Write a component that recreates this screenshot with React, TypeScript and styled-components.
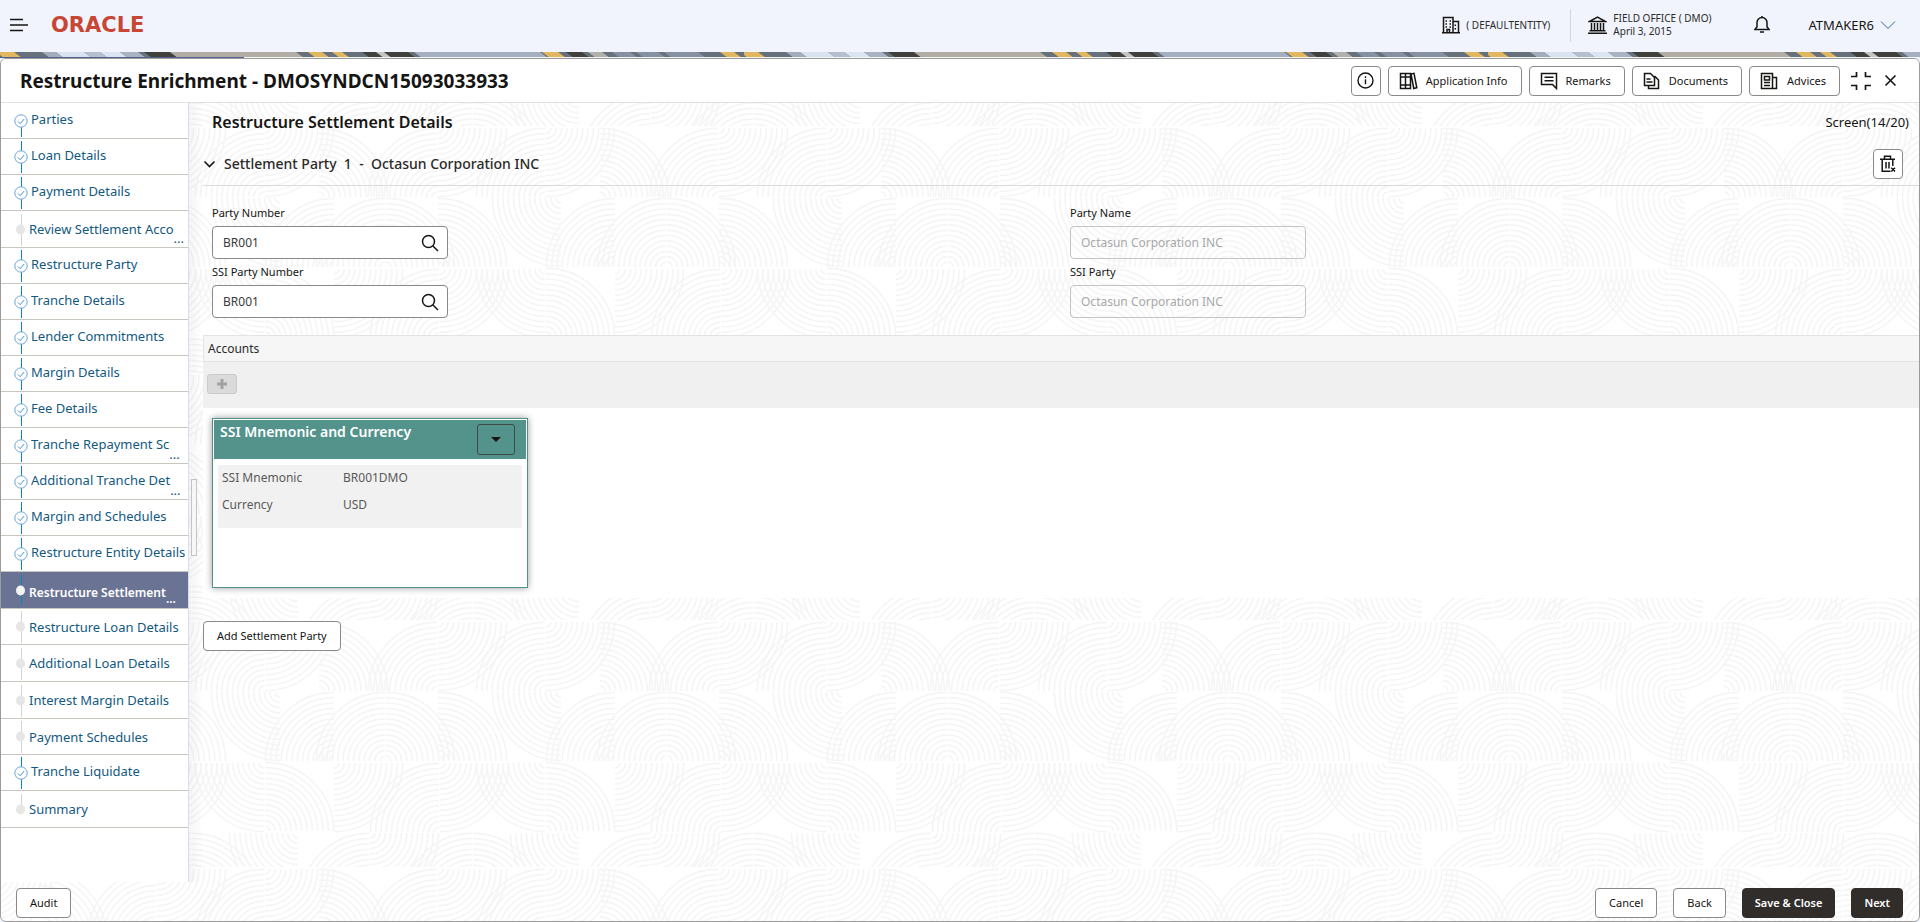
import React from 'react';
import styled, { createGlobalStyle, css } from 'styled-components';

const GlobalStyle = createGlobalStyle`
  *, *::before, *::after { box-sizing: border-box; }
  body { margin: 0; background: #f1f4fd; color: #161513; font: 13px/18px "Noto Sans", "Open Sans", sans-serif; }
  button, input { font-family: inherit; color: inherit; }
  h1, h2, h3, ul, dl, dd { margin: 0; padding: 0; }
`;

const Page = styled.div`
  min-height: 100vh;
  display: flex;
  flex-direction: column;
`;

/* ---------- Top bar ---------- */

const TopBar = styled.header`
  height: 52px;
  padding: 0 24px 2px 9px;
  display: flex;
  align-items: center;
  background: #f1f4fd;
`;

const PlainButton = styled.button`
  display: inline-flex;
  align-items: center;
  justify-content: center;
  padding: 0;
  border: 0;
  background: none;
  cursor: pointer;
`;

const Wordmark = styled.span`
  margin-left: 22px;
  flex: 1;
  color: #c74634;
  font: bold 21px/24px "DejaVu Sans", sans-serif;
`;

const TopItem = styled.div`
  display: flex;
  align-items: center;
  gap: 6px;
  font-size: 10px;
  line-height: 13px;
  color: #2b2a28;
`;

const TopDivider = styled.span`
  width: 1px;
  height: 33px;
  margin: 0 17px 0 20px;
  background: #d5d5d8;
`;

const BellButton = styled(PlainButton)`
  margin: 0 38px 0 43px;
`;

const UserButton = styled(PlainButton)`
  gap: 6px;
  font-size: 13px;
`;

const BannerBox = styled.div`
  height: 6px;
  background: #66717b;
  svg { display: block; }
`;

/* ---------- Panel ---------- */

const Panel = styled.main`
  position: relative;
  flex: 1;
  display: flex;
  flex-direction: column;
  border: 1px solid #9b9b9b;
  border-radius: 6px;
  background: #fff;
  overflow: hidden;
`;

const PatternLayer = styled.svg`
  position: absolute;
  inset: 0;
  width: 100%;
  height: 100%;
`;

const TitleBar = styled.div`
  position: relative;
  height: 44px;
  padding: 0 22px 0 19px;
  display: flex;
  align-items: center;
  border-bottom: 1px solid #e0e0e0;
  background: #fff;
`;

const Title = styled.h1`
  flex: 1;
  font-size: 19px;
  line-height: 26px;
  font-weight: 700;
`;

const Button = styled.button<{ $primary?: boolean }>`
  height: 30px;
  padding: 0 ${p => (p.$primary ? 12 : 13)}px;
  display: inline-flex;
  align-items: center;
  justify-content: center;
  border: 1px solid ${p => (p.$primary ? '#312d2a' : '#8b8885')};
  border-radius: 4px;
  background: ${p => (p.$primary ? '#312d2a' : '#fff')};
  color: ${p => (p.$primary ? '#fff' : '#161513')};
  font-size: 11px;
  line-height: 16px;
  font-weight: ${p => (p.$primary ? 600 : 400)};
  white-space: nowrap;
  cursor: pointer;
`;

const IconButton = styled(Button)`
  width: 30px;
  padding: 0;
`;

const Tools = styled.div`
  display: flex;
  align-items: center;
  gap: 7px;
`;

const ToolButton = styled(Button)`
  padding: 0 13px 0 10px;
  gap: 8px;
`;

const WindowTools = styled.div`
  display: flex;
  align-items: center;
  gap: 13px;
  margin-left: 11px;
`;

const Body = styled.div`
  position: relative;
  flex: 1;
  display: flex;
`;

/* ---------- Steps ---------- */

const Steps = styled.nav`
  width: 188px;
  flex: none;
  border-right: 1px solid #d6dfec;
  background: #fff;
  ul { list-style: none; }
`;

const StepItem = styled.li<{ $tall?: boolean; $active?: boolean }>`
  height: ${p => (p.$tall ? 37 : 36)}px;
  border-bottom: 1px solid #c9c5bf;
  background: ${p => (p.$active ? '#6b7394' : 'transparent')};
`;

const StepLink = styled.a<{ $done?: boolean; $active?: boolean }>`
  height: 100%;
  display: flex;
  align-items: center;
  color: #13597f;
  font-size: 13px;
  line-height: 18px;
  text-decoration: none;
  white-space: nowrap;
  svg { flex: none; }
  ${p => p.$done && css`span { padding-bottom: 4px; }`}
  ${p => p.$active && css`color: #fff; font-size: 12px; font-weight: 600; span { padding-top: 5px; }`}
`;

const Dots = styled.i`
  align-self: flex-end;
  font-style: normal;
`;

/* ---------- Content ---------- */

const Gutter = styled.div`
  width: 14px;
  flex: none;
  display: flex;
  align-items: center;
  padding: 50px 0 0 2px;
  background: linear-gradient(to right, rgba(0, 0, 0, 0.04), transparent);
`;

const Handle = styled.span`
  width: 6px;
  height: 77px;
  border: 1px solid #c4c4c4;
  background: #f7f7f7;
`;

const Content = styled.div`
  flex: 1;
  min-width: 0;
`;

const HeadRow = styled.div`
  height: 40px;
  padding: 0 10px 2px 9px;
  display: flex;
  align-items: center;
  justify-content: space-between;
`;

const PageHeading = styled.h2`
  font-size: 16px;
  line-height: 22px;
  font-weight: 600;
`;

const SectionRow = styled.div`
  height: 43px;
  padding-right: 16px;
  display: flex;
  align-items: center;
  border-bottom: 1px solid #dcdcdc;
`;

const SectionToggle = styled(PlainButton)`
  gap: 8px;
  font-size: 14px;
  line-height: 20px;
  font-weight: 500;
  white-space: pre;
  color: #2b2a28;
`;

const Spacer = styled.span`
  flex: 1;
`;

const Form = styled.form`
  display: grid;
  grid-template-columns: 1fr 1fr;
  row-gap: 5px;
  padding: 19px 0 17px;
`;

const Field = styled.div`
  padding-left: 9px;
  label { display: block; margin-bottom: 5px; font-size: 11px; line-height: 16px; }
`;

const InputShell = styled.div<{ $disabled?: boolean }>`
  width: 236px;
  height: 33px;
  padding: 0 8px 0 10px;
  display: flex;
  align-items: center;
  border: 1px solid ${p => (p.$disabled ? '#c4c4c4' : '#8b8885')};
  border-radius: 4px;
  background: ${p => (p.$disabled ? 'transparent' : '#fff')};
`;

const Input = styled.input`
  flex: 1;
  min-width: 0;
  padding: 0;
  border: 0;
  background: none;
  font-size: 12px;
  line-height: 18px;
  color: #3b3a38;
  &:disabled { color: #a8a8a8; }
`;

const AccountsHead = styled.h3`
  height: 27px;
  padding-left: 4px;
  border: 1px solid #e3e3e3;
  border-right: 0;
  background: #f6f6f6;
  color: #2b2a28;
  font-size: 12px;
  line-height: 25px;
  font-weight: 400;
`;

const AccountsTools = styled.div`
  height: 46px;
  padding: 12px 4px;
  background: #f0f0f0;
`;

const AddButton = styled(PlainButton)`
  width: 30px;
  height: 20px;
  border: 1px solid #cacaca;
  border-radius: 3px;
  background: #dadada;
`;

const CardArea = styled.div`
  padding: 10px 9px;
  background: #fff;
`;

const Card = styled.article`
  width: 316px;
  height: 170px;
  padding: 1px;
  border: 1px solid #4f9188;
  background: #fff;
  box-shadow: 0 0 7px rgba(0, 0, 0, 0.4);
`;

const CardHead = styled.div`
  height: 39px;
  padding: 4px 11px 0 6px;
  display: flex;
  justify-content: space-between;
  background: #54938b;
  color: #fff;
  h3 { font-size: 14px; line-height: 16px; font-weight: 600; }
`;

const CardMenu = styled(PlainButton)`
  width: 38px;
  height: 31px;
  border: 1px solid #3b4a48;
  border-radius: 3px;
`;

const Facts = styled.dl`
  height: 63px;
  margin: 6px 4px;
  padding: 0 4px;
  display: grid;
  grid-template-columns: 121px 1fr;
  grid-auto-rows: 27px;
  background: #f1f1f1;
  color: #5b5958;
  font-size: 12px;
  line-height: 26px;
`;

const AddRow = styled.div`
  padding-top: 23px;
`;

const Footer = styled.footer`
  position: relative;
  height: 39px;
  padding: 6px 16px 0 15px;
  display: flex;
  align-items: flex-start;
  gap: 16px;
`;

/* ---------- Drawings ---------- */

type Quarter = ['UL' | 'UR' | 'LL' | 'LR', number, number];

const QUARTERS: Quarter[][] = [
  [['UR', 0, 70], ['UL', 118, 70], ['LR', 119, 1], ['UL', 226, 70], ['LR', 227, 1]],
  [['UL', 66, 140], ['UR', 67, 140], ['UR', 119, 140], ['LL', 242, 71], ['UL', 296, 140]],
  [['LR', 15, 142], ['UL', 120, 211], ['LR', 121, 142], ['LL', 226, 142], ['UR', 227, 210]],
  [['UL', 50, 281], ['LR', 51, 212], ['UL', 153, 281], ['UR', 154, 281], ['LL', 260, 212]],
];

const RADII = Array.from({ length: 13 }, (_, i) => 5 + i * 5.3);

function quarterPath([kind, cx, cy]: Quarter, dx: number) {
  const x = cx + dx;
  return RADII.map(r => {
    const a = `A${r} ${r} 0 0 1 `;
    if (kind === 'UR') return `M${x} ${cy - r}${a}${x + r} ${cy}`;
    if (kind === 'UL') return `M${x - r} ${cy}${a}${x} ${cy - r}`;
    if (kind === 'LR') return `M${x + r} ${cy}${a}${x} ${cy + r}`;
    return `M${x} ${cy + r}${a}${x - r} ${cy}`;
  }).join('');
}

function ArcPattern() {
  return (
    <PatternLayer aria-hidden="true">
      <defs>
        <clipPath id="arcTile"><rect width="281" height="246" /></clipPath>
        <pattern id="arcs" x="37" y="562" width="281" height="247" patternUnits="userSpaceOnUse">
          <g clipPath="url(#arcTile)" fill="none" stroke="#f5f5f5" strokeWidth="1.7">
            {QUARTERS.flat().map((q, i) => (
              <path key={i} d={[-281, 0, 281].map(dx => quarterPath(q, dx)).join('')} />
            ))}
          </g>
        </pattern>
      </defs>
      <rect width="100%" height="100%" fill="url(#arcs)" />
    </PatternLayer>
  );
}

const BANNER: [number, number, string][] = [
  [-4, 18, '#e3b760'], [42, 14, '#a3adbd'], [56, 28, '#d9e2ef'], [84, 16, '#b5bfcf'], [100, 20, '#dbe4f1'],
  [120, 18, '#a9b3c3'], [144, 26, '#40403d'], [170, 126, '#b1aca4'], [308, 14, '#e3b760'], [332, 10, '#e3b760'],
  [362, 14, '#40403d'], [376, 8, '#c5c5c3'], [384, 24, '#40403d'], [414, 126, '#a4afc2'], [542, 16, '#e3b760'],
  [566, 16, '#40403d'], [588, 14, '#b1b0ac'], [612, 18, '#8590a3'], [636, 22, '#8590a3'], [664, 34, '#8590a3'],
  [720, 14, '#e3b760'],
];

function Banner() {
  return (
    <BannerBox aria-hidden="true">
      <svg width="100%" height="6">
        <defs>
          <pattern id="banner" width="744" height="6" patternUnits="userSpaceOnUse">
            {BANNER.map(([x, w, c]) => (
              <polygon key={x} fill={c} points={`${x},0 ${x + w},0 ${x + w + 8},6 ${x + 8},6`} />
            ))}
          </pattern>
        </defs>
        <rect width="100%" height="6" fill="url(#banner)" />
        <rect y="5" width="100%" height="1" fill="#f4f4f4" />
        <rect y="5" width="244" height="1" fill="#55628f" />
      </svg>
    </BannerBox>
  );
}

const Icon = ({ w = 18, h = 18, sw = 1.5, children }: { w?: number; h?: number; sw?: number; children: React.ReactNode }) => (
  <svg width={w} height={h} viewBox={`0 0 ${w} ${h}`} fill="none" stroke="#161513" strokeWidth={sw} aria-hidden="true">
    {children}
  </svg>
);

const MenuIcon = () => <Icon w={20} h={14} sw={1.6}><path d="M1 1.500h13M1 7h18M1 12.500h13" /></Icon>;
const EntityIcon = () => (
  <Icon><path d="M1.500 17V1.500h9.500V17M11 5.500h5.500V17M0 16.800h18M5 17v-3.500h2.500V17" /><path d="M3.500 5h1.500M7.500 5h1.500M3.500 8h1.500M7.500 8h1.500M3.500 11h1.500M7.500 11h1.500M13.300 8.500v1.500M13.300 12v1.500" /></Icon>
);
const BankIcon = () => (
  <Icon w={19}><path d="M1.500 5.500 9.500 1l8 4.500zM0 17.200h19M1.500 14.800h16M3.500 7v7M6.500 7v7M9.500 7v7M12.500 7v7M15.500 7v7" /></Icon>
);
const BellIcon = () => (
  <Icon w={16}><path d="M1 13.500h14l-2-2.800V6.500a5 5 0 0 0-10 0v4.200zM6 16h4" /><path d="M8 0v1.500" /></Icon>
);
const UserChevron = () => (
  <svg width="16" height="10" fill="none" stroke="#2d6a8e" aria-hidden="true"><path d="M1 1.500l7 7 7-7" /></svg>
);
const InfoIcon = () => (
  <Icon w={17} h={17} sw={1.4}><circle cx="8.500" cy="8.500" r="7.500" /><path d="M8.500 7.300v5M8.500 4.300v1.600" /></Icon>
);
const BooksIcon = () => (
  <Icon w={19}><path d="M1.500 1.500h5v15h-5zM6.500 1.500h5v15h-5zM1.500 5h10M1.500 13h10M12 2l3-.7 2.800 14.500-3 .7z" /></Icon>
);
const RemarksIcon = () => (
  <Icon><path d="M1.500 1.500h15v15l-4-4h-11zM4.500 5.200h9M4.500 8.700h9" /></Icon>
);
const DocumentsIcon = () => (
  <Icon w={18}><path d="M1.500 1.500h6l4 4v8h-10zM3.500 7h4M3.500 10h6M11.500 4l4 4v8.500H5.500v-3" /></Icon>
);
const AdvicesIcon = () => (
  <Icon w={19}><path d="M1.500 1.500h11v15h-11zM12.500 5.500h4v11h-4M4.500 4.500h5v3.500h-5zM4 10.500h6M4 13.500h6" /></Icon>
);
const ShrinkIcon = () => (
  <Icon w={20} sw={1.7}><path d="M5.500 0v4.500H0M14.500 0v4.500H20M5.500 18v-4.500H0M14.500 18v-4.500H20" /></Icon>
);
const CloseIcon = () => <Icon w={13} h={13} sw={1.6}><path d="M1.500 1.500l10 10M11.500 1.500l-10 10" /></Icon>;
const SectionChevron = () => <Icon w={13} h={8} sw={1.6}><path d="M1.500 1.500l5 5 5-5" /></Icon>;
const TrashIcon = () => (
  <Icon><path d="M1 4.200h15M5.500 4V1.200h6V4M3.200 4.500v11.700h8.300M13.800 4.500V11M7 7v6.500M10 7v6.500M12.300 12.800l3.700 3.700M16 12.800l-3.700 3.700" /></Icon>
);
const SearchIcon = () => <Icon><circle cx="7.500" cy="7.500" r="6" /><path d="M12 12l5 5" /></Icon>;
const PlusIcon = () => <svg width="12" height="12" stroke="#a3a3a3" strokeWidth="3" aria-hidden="true"><path d="M6 1v10M1 6h10" /></svg>;
const CaretIcon = () => <svg width="10" height="5" fill="#161513" aria-hidden="true"><path d="M0 0h10L5 5z" /></svg>;

function StepMark({ done, active, first, last }: { done?: boolean; active?: boolean; first?: boolean; last?: boolean }) {
  return (
    <svg width={done ? 30 : 28} height="35" fill="none" aria-hidden="true">
      <path
        d={`M20.500 ${first ? 18 : 2}V${last ? 18 : active ? 32 : 34}`}
        stroke={done || active ? '#0a86b8' : '#d4d4d4'}
        shapeRendering="crispEdges"
      />
      {done ? (
        <>
          <circle cx="20" cy="18" r="6.200" fill="#fff" stroke="#6aa5dd" />
          <path d="M17 18.500l2.200 2.200 4-4.700" stroke="#3f93cf" />
        </>
      ) : (
        <ellipse cx="19.500" cy="17.500" rx="4.500" ry="5" fill={active ? '#f3f3f3' : '#e6e6e6'} />
      )}
    </svg>
  );
}

/* ---------- Data ---------- */

interface Step { label: string; done?: boolean; active?: boolean; cut?: boolean; tall?: boolean }

const STEPS: Step[] = [
  { label: 'Parties', done: true },
  { label: 'Loan Details', done: true },
  { label: 'Payment Details', done: true },
  { label: 'Review Settlement Acco', cut: true, tall: true },
  { label: 'Restructure Party', done: true },
  { label: 'Tranche Details', done: true },
  { label: 'Lender Commitments', done: true },
  { label: 'Margin Details', done: true },
  { label: 'Fee Details', done: true },
  { label: 'Tranche Repayment Sc', done: true, cut: true },
  { label: 'Additional Tranche Det', done: true, cut: true },
  { label: 'Margin and Schedules', done: true },
  { label: 'Restructure Entity Details', done: true },
  { label: 'Restructure Settlement', active: true, cut: true, tall: true },
  { label: 'Restructure Loan Details' },
  { label: 'Additional Loan Details', tall: true },
  { label: 'Interest Margin Details', tall: true },
  { label: 'Payment Schedules' },
  { label: 'Tranche Liquidate', done: true },
  { label: 'Summary', tall: true },
];

const TOOLS = [
  { label: 'Application Info', icon: <BooksIcon /> },
  { label: 'Remarks', icon: <RemarksIcon /> },
  { label: 'Documents', icon: <DocumentsIcon /> },
  { label: 'Advices', icon: <AdvicesIcon /> },
];

function TextField({ id, label, value, disabled }: { id: string; label: string; value: string; disabled?: boolean }) {
  return (
    <Field>
      <label htmlFor={id}>{label}</label>
      <InputShell $disabled={disabled}>
        <Input id={id} defaultValue={value} disabled={disabled} />
        {!disabled && <PlainButton type="button" aria-label={`Search ${label}`}><SearchIcon /></PlainButton>}
      </InputShell>
    </Field>
  );
}

export default function App() {
  return (
    <Page>
      <GlobalStyle />
      <TopBar>
        <PlainButton aria-label="Menu"><MenuIcon /></PlainButton>
        <Wordmark>ORACLE</Wordmark>
        <TopItem><EntityIcon /><span>( DEFAULTENTITY)</span></TopItem>
        <TopDivider />
        <TopItem><BankIcon /><span>FIELD OFFICE ( DMO)<br />April 3, 2015</span></TopItem>
        <BellButton aria-label="Notifications"><BellIcon /></BellButton>
        <UserButton>ATMAKER6<UserChevron /></UserButton>
      </TopBar>
      <Banner />
      <Panel>
        <ArcPattern />
        <TitleBar>
          <Title>Restructure Enrichment - DMOSYNDCN15093033933</Title>
          <Tools>
            <IconButton aria-label="Information"><InfoIcon /></IconButton>
            {TOOLS.map(t => <ToolButton key={t.label}>{t.icon}{t.label}</ToolButton>)}
          </Tools>
          <WindowTools>
            <PlainButton aria-label="Collapse"><ShrinkIcon /></PlainButton>
            <PlainButton aria-label="Close"><CloseIcon /></PlainButton>
          </WindowTools>
        </TitleBar>
        <Body>
          <Steps>
            <ul>
              {STEPS.map((s, i) => (
                <StepItem key={s.label} $tall={s.tall} $active={s.active}>
                  <StepLink href="#" $done={s.done} $active={s.active}>
                    <StepMark done={s.done} active={s.active} first={i === 0} last={i === STEPS.length - 1} />
                    <span>{s.label}</span>
                    {s.cut && <Dots>...</Dots>}
                  </StepLink>
                </StepItem>
              ))}
            </ul>
          </Steps>
          <Gutter><Handle /></Gutter>
          <Content>
            <HeadRow>
              <PageHeading>Restructure Settlement Details</PageHeading>
              <span>Screen(14/20)</span>
            </HeadRow>
            <SectionRow>
              <SectionToggle aria-expanded="true">
                <SectionChevron />
                {'Settlement Party  1  -  Octasun Corporation INC'}
              </SectionToggle>
              <Spacer />
              <IconButton aria-label="Delete"><TrashIcon /></IconButton>
            </SectionRow>
            <Form>
              <TextField id="party-number" label="Party Number" value="BR001" />
              <TextField id="party-name" label="Party Name" value="Octasun Corporation INC" disabled />
              <TextField id="ssi-number" label="SSI Party Number" value="BR001" />
              <TextField id="ssi-party" label="SSI Party" value="Octasun Corporation INC" disabled />
            </Form>
            <AccountsHead>Accounts</AccountsHead>
            <AccountsTools>
              <AddButton disabled aria-label="Add account"><PlusIcon /></AddButton>
            </AccountsTools>
            <CardArea>
              <Card>
                <CardHead>
                  <h3>SSI Mnemonic and Currency</h3>
                  <CardMenu aria-label="Card actions"><CaretIcon /></CardMenu>
                </CardHead>
                <Facts>
                  <dt>SSI Mnemonic</dt><dd>BR001DMO</dd>
                  <dt>Currency</dt><dd>USD</dd>
                </Facts>
              </Card>
            </CardArea>
            <AddRow><Button>Add Settlement Party</Button></AddRow>
          </Content>
        </Body>
        <Footer>
          <Button>Audit</Button>
          <Spacer />
          <Button>Cancel</Button>
          <Button>Back</Button>
          <Button $primary>Save &amp; Close</Button>
          <Button $primary>Next</Button>
        </Footer>
      </Panel>
    </Page>
  );
}
